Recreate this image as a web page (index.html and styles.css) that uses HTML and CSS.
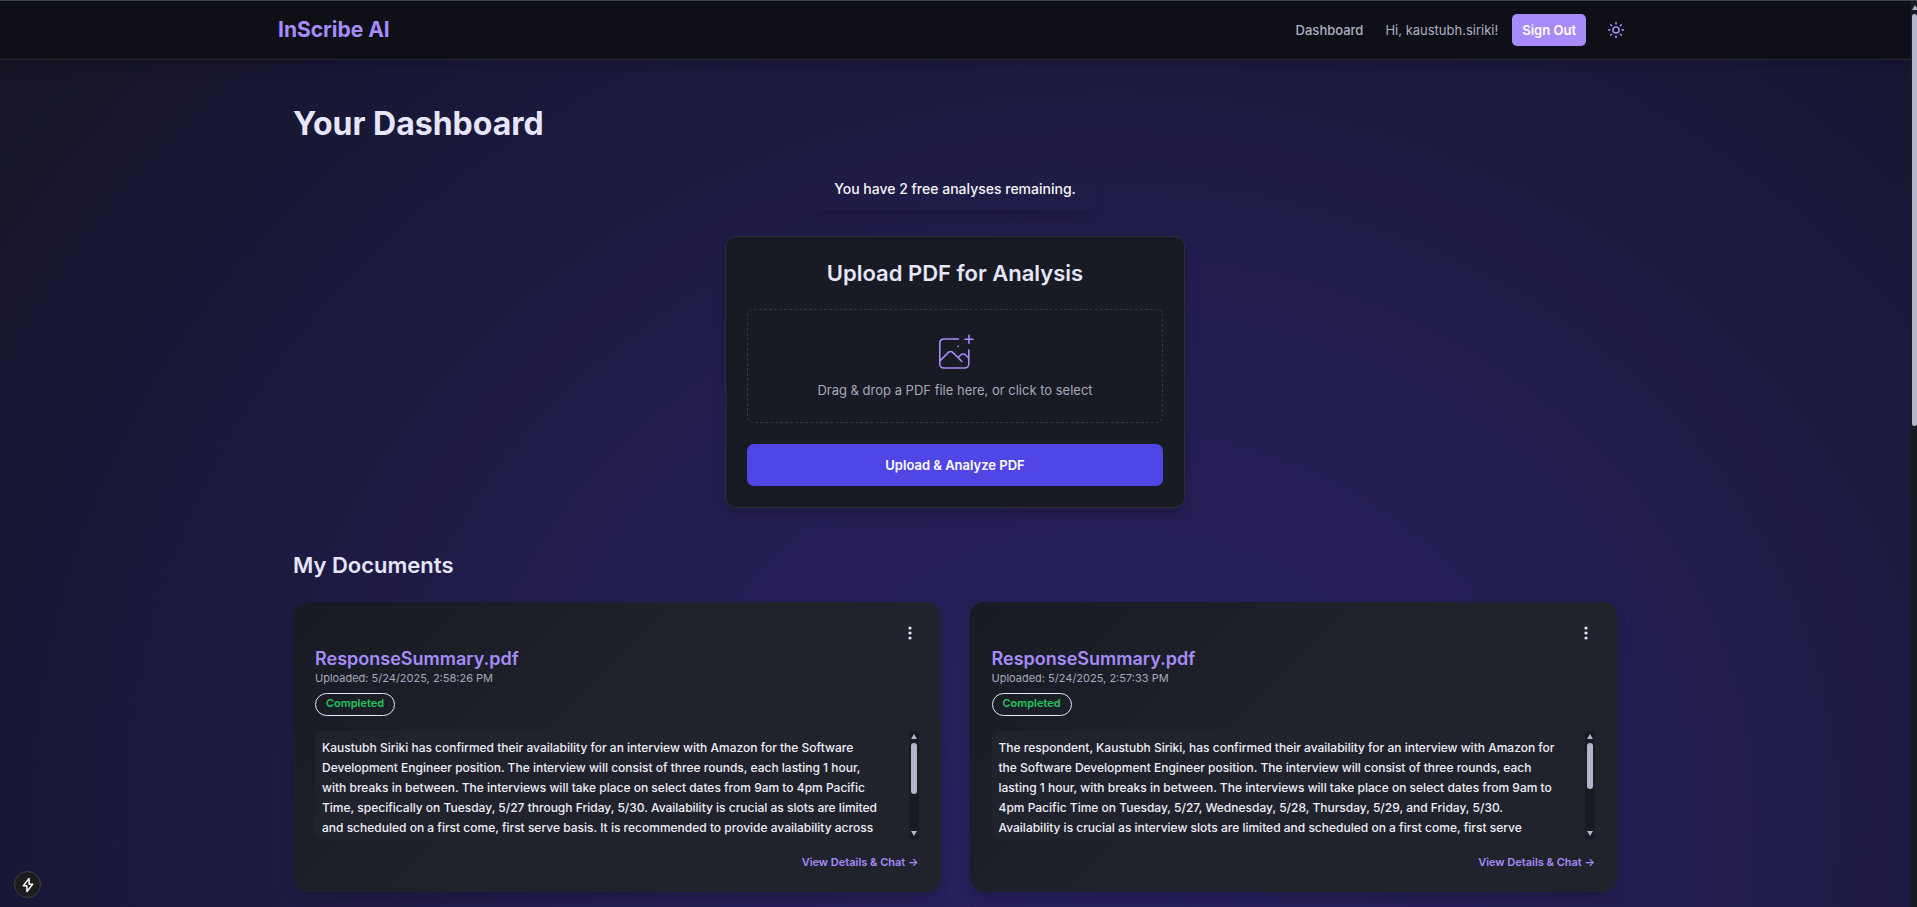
FILE: index.html
```html
<!DOCTYPE html>
<html lang="en">
<head>
<meta charset="utf-8">
<meta name="viewport" content="width=device-width, initial-scale=1">
<title>InScribe AI</title>
<link rel="stylesheet" href="styles.css">
</head>
<body>
<div class="page">
  <header class="site-header">
    <div class="header-inner">
      <a class="logo" href="#">InScribe AI</a>
      <nav class="nav">
        <a class="nav-link" href="#">Dashboard</a>
        <span class="greeting">Hi, kaustubh.siriki!</span>
        <button class="sign-out" type="button">Sign Out</button>
        <button class="theme-toggle" type="button" aria-label="Toggle theme">
          <svg width="18" height="18" viewBox="0 0 24 24" fill="none" stroke="currentColor" stroke-width="2" stroke-linecap="round" aria-hidden="true"><circle cx="12" cy="12" r="4"/><path d="M12 2v2M12 20v2M4.9 4.9l1.4 1.4M17.7 17.7l1.4 1.4M2 12h2M20 12h2M6.3 17.7l-1.4 1.4M19.1 4.9l-1.4 1.4"/></svg>
        </button>
      </nav>
    </div>
  </header>

  <main class="main">
    <h1 class="page-title">Your Dashboard</h1>
    <p class="notice">You have 2 free analyses remaining.</p>

    <section class="upload">
      <h2 class="upload-title">Upload PDF for Analysis</h2>
      <button class="dropzone" type="button">
        <svg class="drop-icon" width="36" height="36" viewBox="0 0 36 36" fill="none" stroke="currentColor" stroke-width="1.6" stroke-linecap="round" stroke-linejoin="round" aria-hidden="true"><path d="M21.4 6H6.8a4 4 0 0 0-4 4v21a4 4 0 0 0 4 4h21a4 4 0 0 0 4-4V17M32 2.2v8M28 6.2h8M3.2 27.6l8-8a3.4 3.4 0 0 1 4.8 0l8.9 8.9M21.4 24.2l2-2a3.8 3.8 0 0 1 5.4 0l2.6 2.6M21.1 13.4h.1"/></svg>
        <span>Drag &amp; drop a PDF file here, or click to select</span>
      </button>
      <button class="upload-button" type="button">Upload &amp; Analyze PDF</button>
    </section>

    <h2 class="section-title">My Documents</h2>
    <div class="documents">
      <article class="doc">
        <button class="doc-menu" type="button" aria-label="Document options">
          <svg width="4" height="14" viewBox="0 0 4 14" fill="currentColor" aria-hidden="true"><circle cx="2" cy="2" r="1.6"/><circle cx="2" cy="7" r="1.6"/><circle cx="2" cy="12" r="1.6"/></svg>
        </button>
        <h3 class="doc-title">ResponseSummary.pdf</h3>
        <p class="doc-date">Uploaded: 5/24/2025, 2:58:26 PM</p>
        <span class="status">Completed</span>
        <div class="summary">
          <p class="summary-text">Kaustubh Siriki has confirmed their availability for an interview with Amazon for the Software<br>Development Engineer position. The interview will consist of three rounds, each lasting 1 hour,<br>with breaks in between. The interviews will take place on select dates from 9am to 4pm Pacific<br>Time, specifically on Tuesday, 5/27 through Friday, 5/30. Availability is crucial as slots are limited<br>and scheduled on a first come, first serve basis. It is recommended to provide availability across</p>
          <div class="scroll" aria-hidden="true"><i class="arrow up"></i><i class="thumb thumb-long"></i><i class="arrow down"></i></div>
        </div>
        <a class="doc-link" href="#">View Details &amp; Chat →</a>
      </article>
      <article class="doc">
        <button class="doc-menu" type="button" aria-label="Document options">
          <svg width="4" height="14" viewBox="0 0 4 14" fill="currentColor" aria-hidden="true"><circle cx="2" cy="2" r="1.6"/><circle cx="2" cy="7" r="1.6"/><circle cx="2" cy="12" r="1.6"/></svg>
        </button>
        <h3 class="doc-title">ResponseSummary.pdf</h3>
        <p class="doc-date">Uploaded: 5/24/2025, 2:57:33 PM</p>
        <span class="status">Completed</span>
        <div class="summary">
          <p class="summary-text">The respondent, Kaustubh Siriki, has confirmed their availability for an interview with Amazon for<br>the Software Development Engineer position. The interview will consist of three rounds, each<br>lasting 1 hour, with breaks in between. The interviews will take place on select dates from 9am to<br>4pm Pacific Time on Tuesday, 5/27, Wednesday, 5/28, Thursday, 5/29, and Friday, 5/30.<br>Availability is crucial as interview slots are limited and scheduled on a first come, first serve</p>
          <div class="scroll" aria-hidden="true"><i class="arrow up"></i><i class="thumb thumb-short"></i><i class="arrow down"></i></div>
        </div>
        <a class="doc-link" href="#">View Details &amp; Chat →</a>
      </article>
    </div>
  </main>
</div>
<div class="page-scroll" aria-hidden="true"><i class="arrow up"></i><i class="page-thumb"></i></div>
<button class="dev-badge" type="button" aria-label="Developer tools">
  <svg width="14" height="16" viewBox="0 0 14 16" fill="none" stroke="currentColor" stroke-width="1.5" stroke-linejoin="round" aria-hidden="true"><path d="M8 1.4L2.4 8.8h3.4L6 14.6l5.6-7.4H8.2z"/></svg>
</button>
</body>
</html>
```
FILE: styles.css
```css
* { box-sizing: border-box; }

body {
  margin: 0;
  min-height: 100vh;
  display: flex;
  overflow-x: hidden;
  font-family: Inter, "Liberation Sans", sans-serif;
  font-size: 13px;
  line-height: 18px;
  color: #e6e6fa;
  background: #14141f;
}

h1, h2, h3, p { margin: 0; }
a { color: inherit; text-decoration: none; }
button { font: inherit; color: inherit; border: 0; padding: 0; background: none; cursor: pointer; }
svg { display: block; overflow: visible; }

.page {
  flex: 1;
  min-width: 0;
  background: radial-gradient(ellipse 1500px 1300px at 58% 90%, #282160 0%, #221d4f 38%, #181734 76%, #14141f 100%);
}

.site-header {
  background: #0f1017;
  border-top: 1px solid #3c484a;
  border-bottom: 1px solid #27282f;
  box-shadow: 0 4px 12px rgba(0, 0, 0, 0.2);
}

.header-inner {
  max-width: 1382px;
  height: 58px;
  margin: 0 auto;
  padding: 0 14px;
  display: flex;
  align-items: center;
  justify-content: space-between;
}

.logo { font-size: 21px; line-height: 28px; font-weight: 700; color: #a78bfa; }
.nav { display: flex; align-items: center; gap: 14px; color: #b0b0c4; }
.nav-link { font-weight: 500; margin-right: 8px; }
.sign-out {
  height: 32px;
  padding: 0 10px;
  border-radius: 5px;
  background: #a78bfa;
  color: #fff;
  font-weight: 600;
}
.theme-toggle { width: 32px; height: 32px; display: grid; place-items: center; color: #a78bfa; }

.main {
  max-width: 1382px;
  margin: 0 auto;
  padding: 44px 29px 13px;
}

.page-title { font-size: 32px; line-height: 40px; font-weight: 700; }

.notice {
  width: fit-content;
  margin: 23px auto 25px;
  padding: 12px 21px;
  border-radius: 7px;
  font-size: 14px;
  line-height: 20px;
  font-weight: 500;
  color: #f5f5f5;
  box-shadow: 0 9px 12px -4px rgba(0, 0, 0, 0.16);
}

.upload {
  max-width: 460px;
  margin: 0 auto;
  padding: 22px 21px 21px;
  display: flex;
  flex-direction: column;
  border: 1px solid #2c2e34;
  border-radius: 11px;
  background: #181b23;
  box-shadow: 0 9px 14px -3px rgba(0, 0, 0, 0.2);
}
.upload-title { margin-bottom: 21px; font-size: 22px; line-height: 29px; font-weight: 600; text-align: center; }
.dropzone {
  display: flex;
  flex-direction: column;
  align-items: center;
  gap: 12px;
  padding: 23px;
  border: 1px dashed #33363d;
  border-radius: 7px;
  color: #a9a9bd;
}
.drop-icon { color: #a78bfa; }
.upload-button {
  height: 42px;
  margin-top: 21px;
  border-radius: 7px;
  background: #4f46e5;
  color: #fff;
  font-weight: 600;
}

.section-title { margin: 43px 0 22px; font-size: 22px; line-height: 29px; font-weight: 600; }

.documents { display: grid; grid-template-columns: repeat(2, minmax(0, 1fr)); gap: 29px; }
.doc {
  display: flex;
  flex-direction: column;
  align-items: flex-start;
  padding: 22px;
  border-radius: 14px;
  background: linear-gradient(135deg, #181b23 0%, #20222c 50%);
  box-shadow: 0 9px 14px -3px rgba(0, 0, 0, 0.2);
}
.doc-menu { width: 18px; height: 18px; display: grid; place-items: center; align-self: flex-end; }
.doc-title { margin-top: 5px; font-size: 18px; line-height: 24px; font-weight: 600; color: #a78bfa; }
.doc-date { font-size: 11px; line-height: 14px; color: #a9a9bd; }
.status {
  margin-top: 8px;
  padding: 2px 10px 5px;
  border: 1px solid #e6e6fa;
  border-radius: 12px;
  font-size: 11px;
  line-height: 14px;
  font-weight: 600;
  color: #22c55e;
}
.summary {
  width: 100%;
  height: 108px;
  margin-top: 15px;
  display: flex;
  justify-content: space-between;
  overflow: hidden;
  border-radius: 7px 0 0 7px;
  background: #21232c;
}
.summary-text { padding: 7px 0 0 7px; font-size: 12px; font-weight: 500; line-height: 20px; color: #f0f0fa; white-space: nowrap; }
.scroll {
  flex: none;
  width: 10px;
  padding: 3px 0;
  display: flex;
  flex-direction: column;
  align-items: center;
  background: #181b23;
}
.arrow { width: 0; height: 0; border: 3px solid transparent; }
.up { border-top: 0; border-bottom: 5px solid #b4b4cc; }
.down { margin-top: auto; border-bottom: 0; border-top: 5px solid #b4b4cc; }
.thumb { width: 6px; margin-top: 4px; border-radius: 3px; background: #b4b4cc; }
.thumb-long { height: 51px; }
.thumb-short { height: 46px; }
.doc-link { margin-top: 15px; align-self: flex-end; font-size: 11px; line-height: 16px; font-weight: 600; color: #a78bfa; }

.page-scroll {
  flex: none;
  width: 7px;
  padding: 4px 0 0 2px;
  background: #181b23;
  border-top: 1px solid #3c484a;
}
.page-scroll .arrow { display: block; }
.page-thumb { display: block; height: 412px; margin-top: 4px; border-radius: 3px; background: #b4b4cc; }

.dev-badge {
  position: fixed;
  left: 14px;
  bottom: 9px;
  width: 27px;
  height: 27px;
  display: grid;
  place-items: center;
  border: 1px solid #414144;
  border-radius: 50%;
  background: #1c1c1e;
  color: #fff;
}
```
